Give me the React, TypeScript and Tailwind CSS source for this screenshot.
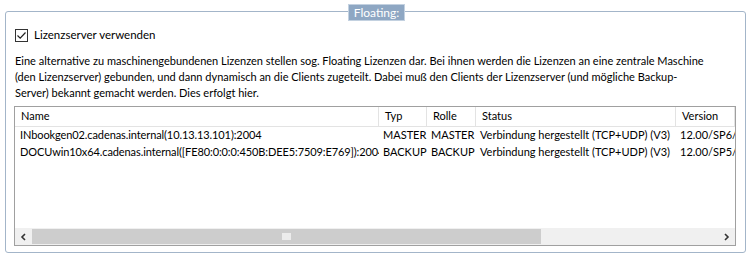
import React from "react";

const columns = [
  { label: "Name", width: "w-[364px]" },
  { label: "Typ", width: "w-[48px]" },
  { label: "Rolle", width: "w-[49px]" },
  { label: "Status", width: "w-[200px]" },
  { label: "Version", width: "w-[59px]" },
];

const rows = [
  [
    "INbookgen02.cadenas.internal(10.13.13.101):2004",
    "MASTER",
    "MASTER",
    "Verbindung hergestellt (TCP+UDP) (V3)",
    "12.00/SP6/...",
  ],
  [
    "DOCUwin10x64.cadenas.internal([FE80:0:0:0:450B:DEE5:7509:E769]):2004",
    "BACKUP",
    "BACKUP",
    "Verbindung hergestellt (TCP+UDP) (V3)",
    "12.00/SP5/...",
  ],
];

export default function App() {
  return (
    <div
      className="relative w-[750px] h-[258px] bg-white text-[11px] text-black pt-[11px] pl-[5px]"
      style={{ fontFamily: 'Lato, "Noto Sans", sans-serif' }}
    >
      <div className="relative w-[741px] h-[242px] border border-[#a3b5c9] rounded-[3px]">
        <div className="absolute left-[342px] top-[-8px] w-[57px] h-[17px] bg-[#8ea7c3] border border-[#c3d1e0] flex items-center justify-center text-white text-[12px] leading-none">
          Floating:
        </div>

        <div className="flex items-center h-[16px] mt-[15px] ml-[9px]">
          <div className="w-[13px] h-[13px] border border-[#333] bg-white flex items-center justify-center">
            <svg width="11" height="11" viewBox="0 0 11 11">
              <path d="M1.5 5.5 L4.2 8.2 L9.5 2.5" fill="none" stroke="#222" strokeWidth="1.2" />
            </svg>
          </div>
          <span className="ml-[6px] text-[11.5px]">Lizenzserver verwenden</span>
        </div>

        <p className="mt-[10px] ml-[9px] mr-[6px] leading-[16px] whitespace-nowrap">
          Eine alternative zu maschinengebundenen Lizenzen stellen sog. Floating Lizenzen dar. Bei ihnen werden die
          Lizenzen an eine zentrale Maschine
          <br />
          (den Lizenzserver) gebunden, und dann dynamisch an die Clients zugeteilt. Dabei muß den Clients der
          Lizenzserver (und mögliche Backup-
          <br />
          Server) bekannt gemacht werden. Dies erfolgt hier.
        </p>

        <div className="mt-[5px] ml-[8px] w-[722px] h-[140px] border border-[#a0a0a0] flex flex-col">
          <div className="flex h-[20px] border-b border-[#e3e3e3]">
            {columns.map((c, i) => (
              <div
                key={i}
                className={`${c.width} shrink-0 h-full flex items-center pl-[6px] border-r border-[#e3e3e3] overflow-hidden whitespace-nowrap`}
              >
                {c.label}
              </div>
            ))}
          </div>
          <div className="flex-1">
            {rows.map((r, ri) => (
              <div key={ri} className="flex h-[17px] items-center">
                {r.map((cell, ci) => (
                  <div
                    key={ci}
                    className={`${columns[ci].width} shrink-0 overflow-hidden whitespace-nowrap ${ci === 0 ? "pl-[5px] tracking-[-0.1px]" : "pl-[4px]"}`}
                  >
                    {cell}
                  </div>
                ))}
              </div>
            ))}
          </div>
          <div className="flex h-[17px] bg-[#f0f0f0]">
            <div className="w-[17px] flex items-center justify-center">
              <svg width="7" height="8" viewBox="0 0 7 8">
                <path d="M5 1 L2 4 L5 7" fill="none" stroke="#333" strokeWidth="1.6" />
              </svg>
            </div>
            <div className="w-[509px] my-[1px] bg-[#cdcdcd] flex items-center justify-center">
              <div className="w-[9px] h-[7px] bg-[#ececec]" />
            </div>
            <div className="flex-1" />
            <div className="w-[17px] flex items-center justify-center">
              <svg width="7" height="8" viewBox="0 0 7 8">
                <path d="M2 1 L5 4 L2 7" fill="none" stroke="#333" strokeWidth="1.6" />
              </svg>
            </div>
          </div>
        </div>
      </div>
    </div>
  );
}
